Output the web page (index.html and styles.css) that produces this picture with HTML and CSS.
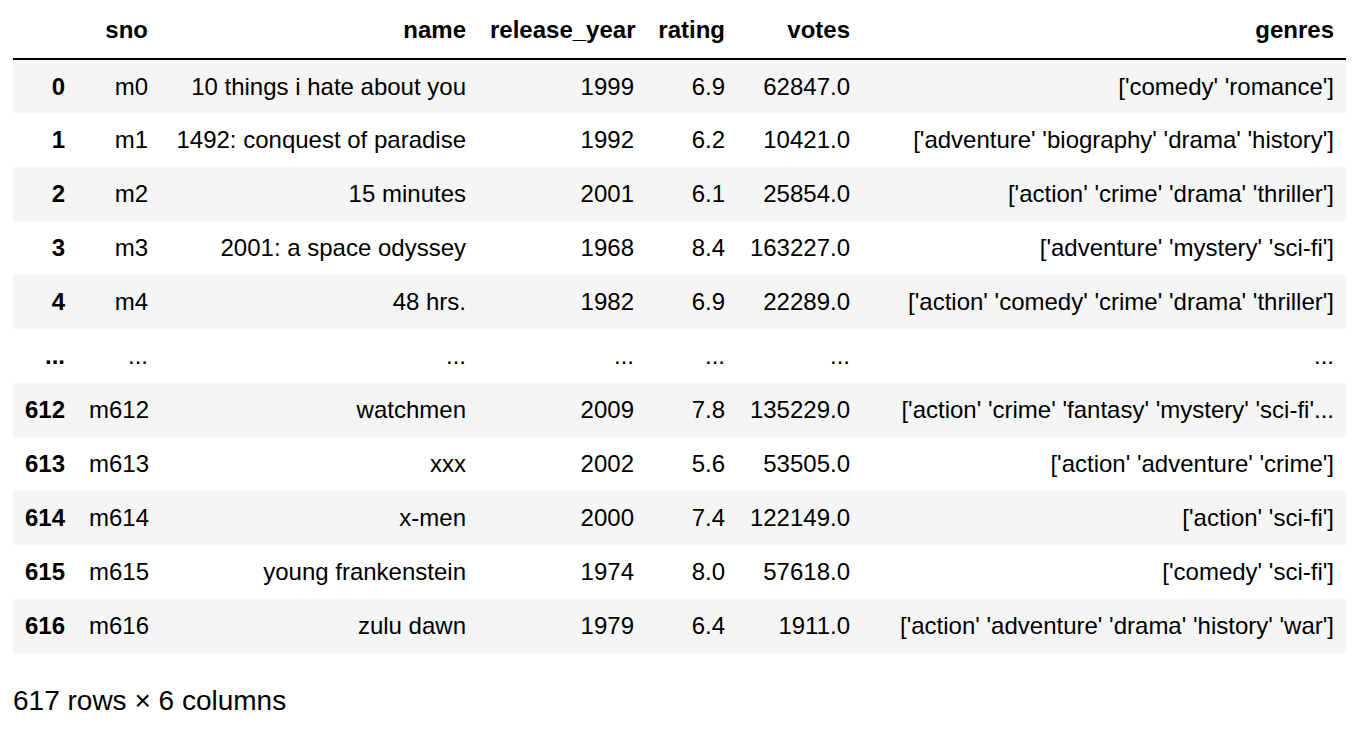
FILE: index.html
```html
<!DOCTYPE html>
<html>
<head>
<meta charset="utf-8">
<link rel="stylesheet" href="styles.css">
</head>
<body>
<div class="output">
<table class="dataframe">
  <thead>
    <tr>
      <th class="c-idx"></th>
      <th class="c-sno">sno</th>
      <th class="c-name">name</th>
      <th class="c-year">release_year</th>
      <th class="c-rating">rating</th>
      <th class="c-votes">votes</th>
      <th class="c-genres">genres</th>
    </tr>
  </thead>
  <tbody>
    <tr class="shade"><th>0</th><td>m0</td><td>10 things i hate about you</td><td>1999</td><td>6.9</td><td>62847.0</td><td>['comedy' 'romance']</td></tr>
    <tr><th>1</th><td>m1</td><td>1492: conquest of paradise</td><td>1992</td><td>6.2</td><td>10421.0</td><td>['adventure' 'biography' 'drama' 'history']</td></tr>
    <tr class="shade"><th>2</th><td>m2</td><td>15 minutes</td><td>2001</td><td>6.1</td><td>25854.0</td><td>['action' 'crime' 'drama' 'thriller']</td></tr>
    <tr><th>3</th><td>m3</td><td>2001: a space odyssey</td><td>1968</td><td>8.4</td><td>163227.0</td><td>['adventure' 'mystery' 'sci-fi']</td></tr>
    <tr class="shade"><th>4</th><td>m4</td><td>48 hrs.</td><td>1982</td><td>6.9</td><td>22289.0</td><td>['action' 'comedy' 'crime' 'drama' 'thriller']</td></tr>
    <tr><th>...</th><td>...</td><td>...</td><td>...</td><td>...</td><td>...</td><td>...</td></tr>
    <tr class="shade"><th>612</th><td>m612</td><td>watchmen</td><td>2009</td><td>7.8</td><td>135229.0</td><td>['action' 'crime' 'fantasy' 'mystery' 'sci-fi'...</td></tr>
    <tr><th>613</th><td>m613</td><td>xxx</td><td>2002</td><td>5.6</td><td>53505.0</td><td>['action' 'adventure' 'crime']</td></tr>
    <tr class="shade"><th>614</th><td>m614</td><td>x-men</td><td>2000</td><td>7.4</td><td>122149.0</td><td>['action' 'sci-fi']</td></tr>
    <tr><th>615</th><td>m615</td><td>young frankenstein</td><td>1974</td><td>8.0</td><td>57618.0</td><td>['comedy' 'sci-fi']</td></tr>
    <tr class="shade"><th>616</th><td>m616</td><td>zulu dawn</td><td>1979</td><td>6.4</td><td>1911.0</td><td>['action' 'adventure' 'drama' 'history' 'war']</td></tr>
  </tbody>
</table>
<p class="summary">617 rows × 6 columns</p>
</div>
</body>
</html>
```

FILE: styles.css
```css
html, body {
  margin: 0;
  padding: 0;
  background: #ffffff;
}

body {
  font-family: "Liberation Sans", Arial, Helvetica, sans-serif;
  font-size: 24px;
  color: #000000;
}

.output {
  padding: 3px 0 0 13px;
}

.dataframe {
  border-collapse: collapse;
  border-spacing: 0;
  border: none;
  table-layout: fixed;
  width: 1333px;
}

.dataframe th,
.dataframe td {
  text-align: right;
  vertical-align: middle;
  padding: 0 12px;
  height: 54px;
  line-height: 30px;
  white-space: nowrap;
  border: none;
  box-sizing: border-box;
}

.dataframe th {
  font-weight: bold;
}

.dataframe thead th {
  border-bottom: 2px solid #000000;
  height: 56px;
  padding-bottom: 2px;
}

.dataframe tbody tr.shade {
  background: #f5f5f5;
}

.c-idx { width: 64px; }
.c-sno { width: 83px; }
.c-name { width: 318px; }
.c-year { width: 168px; }
.c-rating { width: 91px; }
.c-votes { width: 125px; }
.c-genres { width: 484px; }

.summary {
  margin: 31px 0 0 0;
  font-size: 28px;
  line-height: 34px;
}
```
